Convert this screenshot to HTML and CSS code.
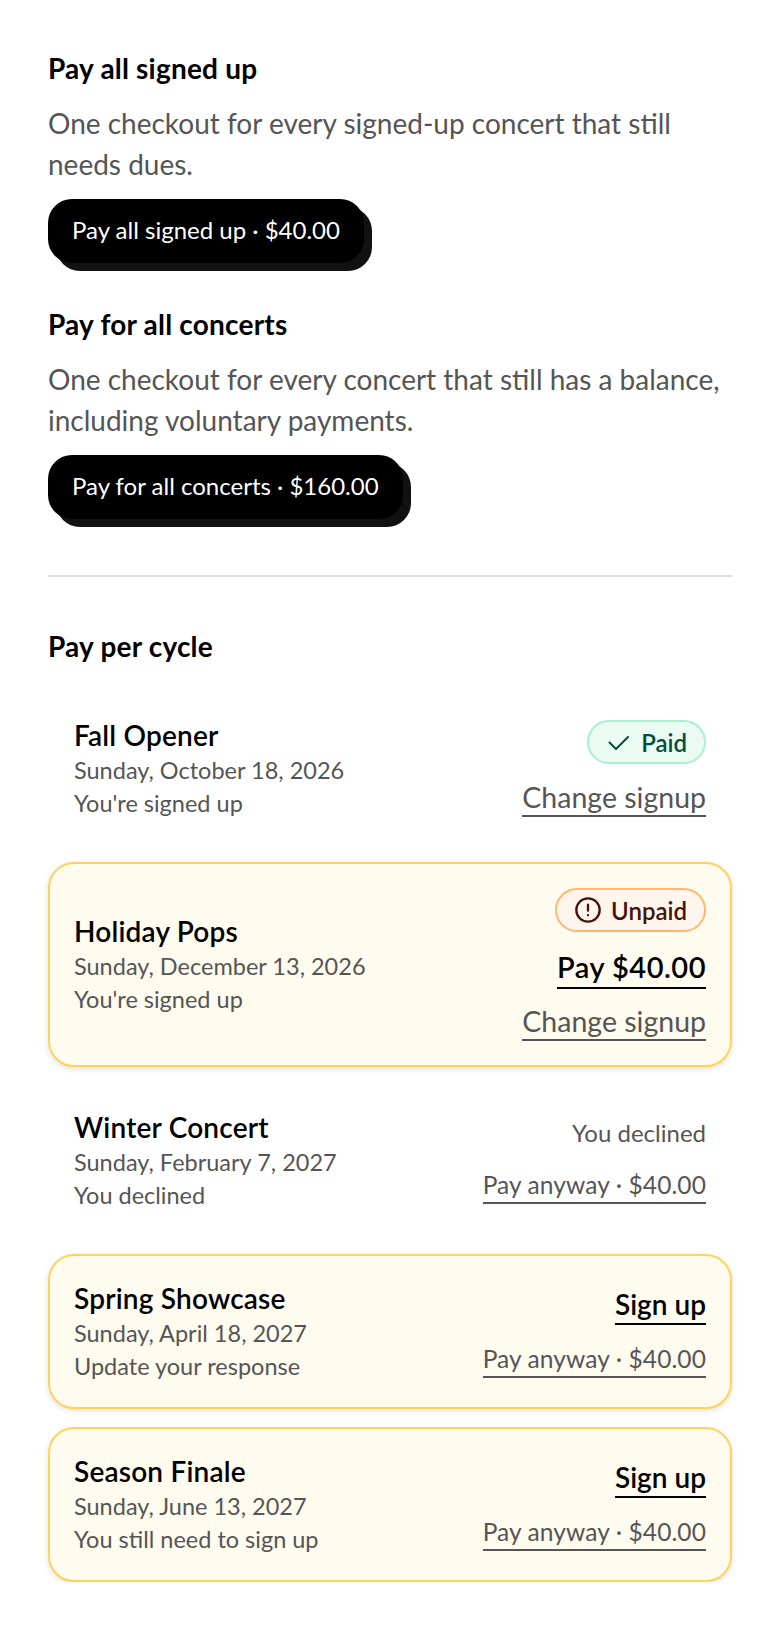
FILE: index.html
```html
<!DOCTYPE html>
<html lang="en">
<head>
  <meta charset="UTF-8">
  <meta name="viewport" content="width=device-width, initial-scale=1.0">
  <title>Pay dues</title>
  <link rel="stylesheet" href="styles.css">
</head>
<body>
  <section class="pay-block">
    <h3>Pay all signed up</h3>
    <p>One checkout for every signed-up concert that still needs dues.</p>
    <button class="pay-btn">Pay all signed up · $40.00</button>
  </section>

  <section class="pay-block">
    <h3>Pay for all concerts</h3>
    <p>One checkout for every concert that still has a balance, including voluntary payments.</p>
    <button class="pay-btn">Pay for all concerts · $160.00</button>
  </section>

  <hr class="divider">

  <h3 class="cycle-title">Pay per cycle</h3>

  <div class="cycle-list">
    <div class="cycle-row">
      <div class="info">
        <div class="name">Fall Opener</div>
        <div class="date">Sunday, October 18, 2026</div>
        <div class="note">You're signed up</div>
      </div>
      <div class="actions">
        <span class="badge paid">
          <svg width="24" height="24" viewBox="0 0 24 24" fill="none" stroke="currentColor" stroke-width="2" stroke-linecap="round" stroke-linejoin="round"><path d="M3.5 12.5L10 19L22 7"/></svg>
          Paid
        </span>
        <a class="link muted">Change signup</a>
      </div>
    </div>

    <div class="cycle-row todo">
      <div class="info">
        <div class="name">Holiday Pops</div>
        <div class="date">Sunday, December 13, 2026</div>
        <div class="note">You're signed up</div>
      </div>
      <div class="actions">
        <span class="badge unpaid">
          <svg width="28" height="28" viewBox="0 0 24 24" fill="none" stroke="currentColor" stroke-width="2" stroke-linecap="round"><circle cx="12" cy="12" r="10"/><path d="M12 7.5v5M12 16.4v.1"/></svg>
          Unpaid
        </span>
        <a class="link strong pay-now">Pay $40.00</a>
        <a class="link muted">Change signup</a>
      </div>
    </div>

    <div class="cycle-row">
      <div class="info">
        <div class="name">Winter Concert</div>
        <div class="date">Sunday, February 7, 2027</div>
        <div class="note">You declined</div>
      </div>
      <div class="actions">
        <span class="declined">You declined</span>
        <a class="link muted small">Pay anyway · $40.00</a>
      </div>
    </div>

    <div class="cycle-row todo">
      <div class="info">
        <div class="name">Spring Showcase</div>
        <div class="date">Sunday, April 18, 2027</div>
        <div class="note">Update your response</div>
      </div>
      <div class="actions">
        <a class="link strong">Sign up</a>
        <a class="link muted small">Pay anyway · $40.00</a>
      </div>
    </div>

    <div class="cycle-row todo">
      <div class="info">
        <div class="name">Season Finale</div>
        <div class="date">Sunday, June 13, 2027</div>
        <div class="note">You still need to sign up</div>
      </div>
      <div class="actions">
        <a class="link strong">Sign up</a>
        <a class="link muted small">Pay anyway · $40.00</a>
      </div>
    </div>
  </div>
</body>
</html>
```

FILE: styles.css
```css
* {
  box-sizing: border-box;
}
body {
  font-family: Lato, sans-serif;
  margin: 0;
  padding: 48px 48px 0;
  background-color: #fff;
  color: #000;
}
h3 {
  margin: 0;
  font-size: 28px;
  line-height: 40px;
  font-weight: 700;
  letter-spacing: 0.2px;
}
.pay-block {
  margin-bottom: 41px;
}
.pay-block p {
  margin: 15px 0 14px;
  font-size: 28px;
  line-height: 41px;
  color: #555;
}
.pay-btn {
  display: block;
  height: 64px;
  padding: 0 24px 3px;
  margin-bottom: 8px;
  border: none;
  border-radius: 24px;
  background-color: #000;
  color: #fff;
  font-family: inherit;
  font-size: 24px;
  box-shadow: 8px 8px 0 #111;
}
.divider {
  height: 2px;
  margin: 56px 0 49px;
  border: none;
  background-color: #ddd;
}
.cycle-title {
  margin-bottom: 27px;
}
.cycle-list {
  display: flex;
  flex-direction: column;
  gap: 18px;
}
.cycle-row {
  display: flex;
  justify-content: space-between;
  align-items: center;
  margin: 6px 0;
  padding: 16px 24px;
  border: 2px solid transparent;
  border-radius: 26px;
}
.cycle-row.todo {
  margin: 0;
  padding: 24px;
  background-color: #fffbef;
  border-color: #ffd35a;
  box-shadow: 0 2px 6px rgba(0, 0, 0, 0.12);
}
.name {
  font-size: 28px;
  line-height: 37px;
  font-weight: 600;
  letter-spacing: 0.2px;
}
.date, .note {
  font-size: 23.5px;
  line-height: 33px;
  color: #555;
}
.actions {
  display: flex;
  flex-direction: column;
  align-items: flex-end;
  gap: 14px;
}
.badge {
  display: inline-flex;
  align-items: center;
  gap: 11px;
  height: 44px;
  margin-bottom: 1px;
  padding: 0 17px;
  border-radius: 22px;
  border: 2px solid;
  font-size: 24px;
  font-weight: 600;
}
.badge.paid {
  background-color: #e9fbf3;
  border-color: #a6f0d0;
  color: #064e3b;
}
.badge.unpaid {
  gap: 9px;
  background-color: #fff5ec;
  border-color: #ffb86b;
  color: #431407;
}
.link {
  border-bottom: 2px solid currentColor;
  line-height: 36px;
}
.link.muted {
  font-size: 28.5px;
  color: #555;
}
.link.muted.small {
  padding-top: 2px;
  font-size: 24.5px;
  line-height: 35px;
  letter-spacing: 0.1px;
}
.link.strong {
  font-size: 28px;
  line-height: 37px;
  font-weight: 600;
  color: #000;
}
.link.pay-now {
  font-size: 29px;
  line-height: 40px;
  letter-spacing: 0.5px;
}
.declined {
  margin-bottom: 4px;
  font-size: 24px;
  line-height: 29px;
  color: #555;
}
```
